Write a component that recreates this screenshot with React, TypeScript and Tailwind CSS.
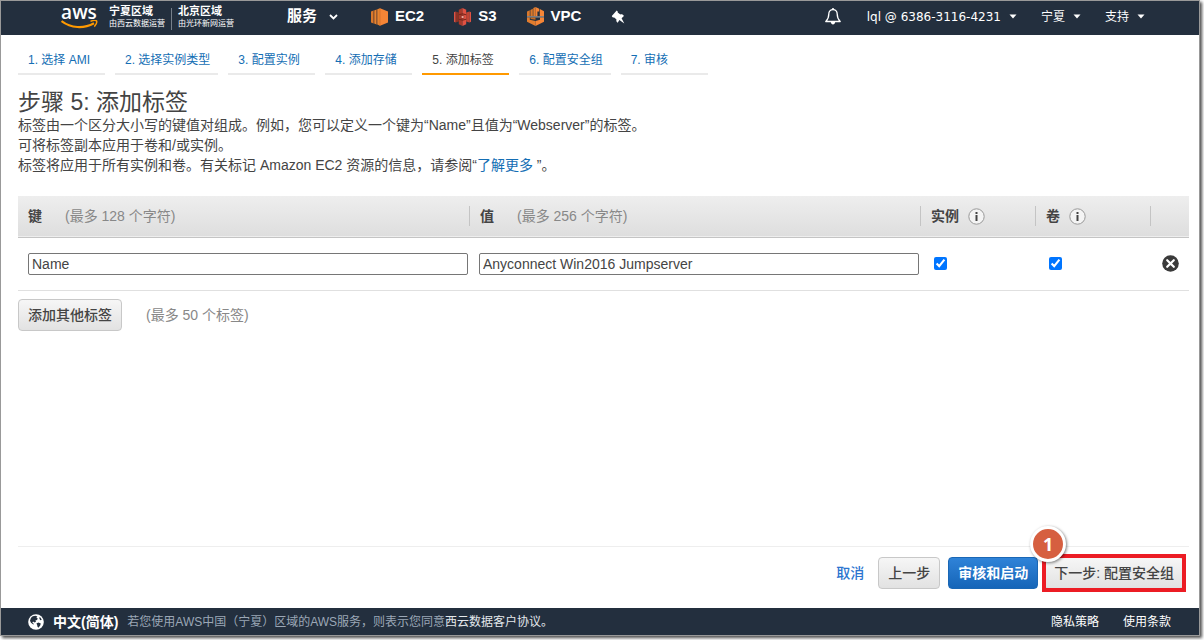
import { useState } from 'react'
import type { ReactNode } from 'react'
import clsx from 'clsx'

const steps = [
  '1. 选择 AMI',
  '2. 选择实例类型',
  '3. 配置实例',
  '4. 添加存储',
  '5. 添加标签',
  '6. 配置安全组',
  '7. 审核',
]

const currentStep = 4

function Ec2Icon() {
  return (
    <svg viewBox="0 0 17 18" className="h-[18px] w-[17px]" aria-hidden="true">
      <path d="M0 3.500 2.600 2.600v12.800L0 14.500z" fill="#d9782b" />
      <path d="M3.200 2.400 5.600 1.600v14.800l-2.400-.8z" fill="#e8842f" />
      <path d="M2.600 2.600h.6v12.900h-.6zM5.600 1.600h.7v14.900h-.7z" fill="#9d5025" />
      <path d="M6.300 1.300 9 .2v17.600l-2.700-1.200z" fill="#e8842f" />
      <path d="m9 .2 8 3.300v11L9 17.800z" fill="#f58536" />
      <path d="M9 .2v17.600" stroke="#c96a28" strokeWidth="0.6" />
    </svg>
  )
}

function S3Icon() {
  return (
    <svg viewBox="0 0 17 18" className="h-[18px] w-[17px]" aria-hidden="true">
      <path d="M1.500 3.400 4.800 4.400v9.200l-3.300 1z" fill="#8c3123" />
      <path d="M0 4.200 1.500 3.400v11.200L0 13.800z" fill="#e05243" />
      <path d="m15.500 3.400-3.300 1v9.200l3.300 1z" fill="#c04434" />
      <path d="m15.500 3.400 1.500.8v9.600l-1.500.8z" fill="#e05243" />
      <path d="M8.500 0 4.800 1.800v14.400L8.500 18z" fill="#a93a2b" />
      <path d="m8.500 0 3.700 1.800v14.400L8.500 18z" fill="#e05243" />
      <path d="M4.800 6.200 8.500 5.300l3.700.9v1L8.500 6.600l-3.700.6zM4.800 11.800l3.700.9 3.700-.9v-1l-3.700.6-3.700-.6z" fill="#7a281c" />
      <path d="M6.800 7.400h3.400v3.200H6.800z" fill="#8c3123" />
      <path d="M7.600 8h2v2h-2z" fill="#f2a79d" />
    </svg>
  )
}

function VpcIcon() {
  return (
    <svg viewBox="0 0 17 19" className="h-[19px] w-[17px]" aria-hidden="true">
      <path d="M0 4.400 2.800 3.200v6H0zM3.400 2.900 5.800 1.800v7.400H3.400z" fill="#d9782b" />
      <path d="M8.500 0 6.300 1v8.200h2.200z" fill="#e27d2e" />
      <path d="m8.500 0 3.700 1.700v2.800h-1.800v4.700H8.500z" fill="#f58536" />
      <path d="m12.800 2 4.200 2.200v5h-4.200z" fill="#f58536" />
      <path d="M0 9.300h17v1.200H0z" fill="#8f9aa5" />
      <path d="M0 10.500h2.800v2.200l5.700 1.200V19L0 14.800z" fill="#e27d2e" />
      <path d="M3.600 10.500h4.900v2.200l-4.900-.8z" fill="#c46a22" />
      <path d="M8.500 13.900 13 12.800v-2.300h4v4.300L8.500 19z" fill="#f58536" />
    </svg>
  )
}

function PinIcon() {
  return (
    <svg viewBox="0 0 14 14" className="size-[14px]" aria-hidden="true">
      <path
        d="M5.700.4c1 .4 1.300 1.300 1 2.100l2.700 1.900c1.200-.4 2.900.1 3.500 1.500L10.600 8.200l2.700 5.200-4.900-3.300-1.700 2.700c-1.300-.7-1.700-2-1.200-3.200L3.200 7.500C2.300 7.600 1.100 7.200.8 6z"
        fill="#fff"
      />
    </svg>
  )
}

function BellIcon() {
  return (
    <svg viewBox="0 0 16 17" className="h-[17px] w-4" fill="none" aria-hidden="true">
      <path
        d="M8 1.600c-2.700 0-4.200 1.900-4.200 4.500 0 3.900-1 5.600-3 7.400h14.400c-2-1.800-3-3.500-3-7.400 0-2.600-1.500-4.500-4.200-4.500z"
        stroke="#fff"
        strokeWidth="1.300"
        strokeLinejoin="round"
      />
      <path d="M7.200 0h1.600v2H7.200zM5.800 14h4.400c-.2 1.500-1 2.400-2.200 2.400S6 15.500 5.800 14z" fill="#fff" />
    </svg>
  )
}

function GlobeIcon() {
  return (
    <svg viewBox="0 0 16 16" className="size-4" aria-hidden="true">
      <circle cx="8" cy="8" r="7.800" fill="#fff" />
      <path
        d="M2.800 4.200C4 2.600 5.600 1.800 7.400 1.800l2 .8-1 1.200 1.400.6-.8 1.600-1.600.6.6 1.200-1.400.6-1.600-1-.6 1.400 1.600 1.200-.8.6-2.200-1.800L2 6.800zM11 3.400l1.400.2 1.400 2.200-1.600.4zM8.400 9.400l2-.8 2.400 1-.6 2-1.800 2.200-1-1.200-.2-1.600z"
        fill="#232f3e"
      />
    </svg>
  )
}

function InfoIcon() {
  return (
    <svg viewBox="0 0 17 17" className="size-[17px]" aria-hidden="true">
      <circle cx="8.500" cy="8.500" r="7.700" fill="#f4f4f4" stroke="#999" />
      <path d="M7.500 4h2v2h-2zM7.500 7h2v6h-2z" fill="#444" />
    </svg>
  )
}

function RemoveIcon() {
  return (
    <svg viewBox="0 0 17 17" className="size-[17px]" aria-hidden="true">
      <circle cx="8.500" cy="8.500" r="8.300" fill="#3a3a3a" />
      <path d="m5.200 5.200 6.600 6.600m0-6.600-6.600 6.600" stroke="#fff" strokeWidth="2.200" strokeLinecap="round" />
    </svg>
  )
}

function Caret() {
  return (
    <svg viewBox="0 0 8 5" className="h-[5px] w-2" aria-hidden="true">
      <path d="M.5.500h7L4 4.500z" fill="#fff" />
    </svg>
  )
}

function Logo() {
  return (
    <a href="#home" className="flex items-start text-white">
      <span className="flex w-9 flex-col items-center">
        <span className="font-['Open_Sans',sans-serif] text-[19px] leading-[16px] font-semibold">aws</span>
        <svg viewBox="0 0 37 9" className="h-[9px] w-[37px]" fill="none" aria-hidden="true">
          <path d="M.5 1c9.500 7.300 22 8 32.500 2.200" stroke="#f90" strokeWidth="2.200" />
          <path d="M29.500 1.400c2.500-1.100 5-1.200 6-.6.500 1.100-.3 3.900-2.200 5.800" stroke="#f90" strokeWidth="1.500" />
        </svg>
      </span>
      <span className="ml-3 flex flex-col whitespace-nowrap">
        <span className="text-[11px] leading-[14px] font-bold">宁夏区域</span>
        <span className="text-[8px] leading-[12px]">由西云数据运营</span>
      </span>
      <span className="mx-1.5 mt-1 h-[22px] w-px bg-[#77808b]" />
      <span className="flex flex-col whitespace-nowrap">
        <span className="text-[11px] leading-[14px] font-bold">北京区域</span>
        <span className="text-[8px] leading-[12px]">由光环新网运营</span>
      </span>
    </a>
  )
}

function Shortcut({ icon, label }: { icon: ReactNode; label: string }) {
  return (
    <a href={`#${label.toLowerCase()}`} className="flex items-center gap-[7px] text-[15px] font-bold text-white">
      {icon}
      {label}
    </a>
  )
}

function NavMenu({ label }: { label: string }) {
  return (
    <button type="button" className="flex items-center gap-2 text-xs whitespace-nowrap text-white">
      {label}
      <Caret />
    </button>
  )
}

function Topbar() {
  return (
    <header className="flex h-[34px] items-center justify-between bg-[#232f3e] pr-[54px] pb-[3px] pl-[60px]">
      <div className="flex items-center">
        <Logo />
        <button type="button" className="ml-[53px] flex items-center gap-3 text-[15px] font-bold text-white">
          服务
          <svg viewBox="0 0 9 6" className="h-1.5 w-[9px]" fill="none" aria-hidden="true">
            <path d="M1 1l3.500 3.500L8 1" stroke="#fff" strokeWidth="1.800" />
          </svg>
        </button>
        <nav className="ml-[33px] flex items-center gap-[30px]">
          <Shortcut icon={<Ec2Icon />} label="EC2" />
          <Shortcut icon={<S3Icon />} label="S3" />
          <Shortcut icon={<VpcIcon />} label="VPC" />
          <button type="button" aria-label="固定">
            <PinIcon />
          </button>
        </nav>
      </div>
      <div className="flex items-center gap-6 font-['DejaVu_Sans','Noto_Sans_CJK_SC',sans-serif]">
        <button type="button" className="mr-0.5" aria-label="通知">
          <BellIcon />
        </button>
        <NavMenu label="lql @ 6386-3116-4231" />
        <NavMenu label="宁夏" />
        <NavMenu label="支持" />
      </div>
    </header>
  )
}

function StepTabs() {
  return (
    <nav className="flex gap-2.5 text-xs">
      {steps.map((step, i) => (
        <a
          key={step}
          href={`#step-${i + 1}`}
          className={clsx(
            'min-w-[87px] border-b-2 pt-4 pr-2 pb-1 pl-2.5 leading-[18px]',
            i === currentStep ? 'border-[#f90] text-[#444]' : 'border-[#eaeaea] text-[#146eb4]',
          )}
        >
          {step}
        </a>
      ))}
    </nav>
  )
}

function Button({ children, primary }: { children: ReactNode; primary?: boolean }) {
  return (
    <button
      type="button"
      className={clsx(
        'h-8 rounded border bg-linear-to-b px-[9px] text-sm whitespace-nowrap',
        primary
          ? 'border-[#1a67b5] from-[#2f83d8] to-[#1565b8] font-bold text-white'
          : 'border-[#c8c8c8] from-[#f6f6f6] to-[#e2e2e2] font-medium text-[#444]',
      )}
    >
      {children}
    </button>
  )
}

function HeadCell({ title, hint, info, first }: { title?: string; hint?: string; info?: boolean; first?: boolean }) {
  return (
    <th scope="col" className="p-0 font-normal">
      <div className={clsx('flex h-5 items-center pl-2.5', !first && 'border-l border-[#c4c4c4]')}>
        <span className="font-bold text-[#444]">{title}</span>
        {hint && <span className="ml-[23px] text-[#888]">{hint}</span>}
        {info && (
          <button type="button" className="ml-[9px]" aria-label={`${title} 信息`}>
            <InfoIcon />
          </button>
        )}
      </div>
    </th>
  )
}

function TagTable() {
  const [tag, setTag] = useState({ key: 'Name', value: 'Anyconnect Win2016 Jumpserver', instance: true, volume: true })
  const inputClass = 'block h-[22px] w-full rounded-xs border border-[#767676] bg-white px-[3px] text-sm text-[#444]'

  return (
    <table className="mt-[21px] w-full table-fixed border-collapse text-left text-sm">
      <colgroup>
        <col />
        <col />
        <col className="w-[115px]" />
        <col className="w-[115px]" />
        <col className="w-[39px]" />
      </colgroup>
      <thead>
        <tr className="h-[41px] border-b border-[#c4c4c4] bg-linear-to-b from-[#eee] to-[#dedede]">
          <HeadCell title="键" hint="(最多 128 个字符)" first />
          <HeadCell title="值" hint="(最多 256 个字符)" />
          <HeadCell title="实例" info />
          <HeadCell title="卷" info />
          <HeadCell />
        </tr>
      </thead>
      <tbody>
        <tr className="h-[53px] border-b border-[#e0e0e0]">
          <td className="pr-px pl-2.5">
            <input
              aria-label="键"
              className={inputClass}
              value={tag.key}
              onChange={(e) => setTag({ ...tag, key: e.target.value })}
            />
          </td>
          <td className="pr-px pl-2.5">
            <input
              aria-label="值"
              className={inputClass}
              value={tag.value}
              onChange={(e) => setTag({ ...tag, value: e.target.value })}
            />
          </td>
          <td className="pl-3.5">
            <input
              type="checkbox"
              aria-label="实例"
              className="block size-[13px] accent-[#0075ff]"
              checked={tag.instance}
              onChange={(e) => setTag({ ...tag, instance: e.target.checked })}
            />
          </td>
          <td className="pl-3.5">
            <input
              type="checkbox"
              aria-label="卷"
              className="block size-[13px] accent-[#0075ff]"
              checked={tag.volume}
              onChange={(e) => setTag({ ...tag, volume: e.target.checked })}
            />
          </td>
          <td className="pl-3">
            <button type="button" className="block" aria-label="删除标签">
              <RemoveIcon />
            </button>
          </td>
        </tr>
      </tbody>
    </table>
  )
}

function Actions() {
  return (
    <div className="mr-2.5 ml-[17px] flex items-center justify-end border-t border-[#eee] pt-[7px] pr-[3px] pb-4 text-sm">
      <a href="#cancel" className="mr-3.5 font-medium text-[#2b74cf]">
        取消
      </a>
      <div className="flex items-center gap-2">
        <Button>上一步</Button>
        <Button primary>审核和启动</Button>
      </div>
      <div className="relative ml-1 flex border-4 border-[#ec1c24]">
        <div className="-mx-0.5 -my-px flex">
          <Button>下一步: 配置安全组</Button>
        </div>
        <div className="pointer-events-none absolute -inset-1 border-4 border-[#ec1c24]" />
        <span className="absolute -top-8 -left-4 flex size-9 items-center justify-center rounded-full border-3 border-white bg-[#d65f40] font-['Open_Sans',sans-serif] text-lg font-bold text-white shadow-[1px_1px_3px_rgba(0,0,0,0.5)]">
          1
        </span>
      </div>
    </div>
  )
}

function Footer() {
  return (
    <footer className="flex h-[27px] items-center justify-between bg-[#232f3e] pr-7 pl-[27px] text-xs whitespace-nowrap text-white">
      <div className="flex items-center">
        <GlobeIcon />
        <button type="button" className="ml-[9px] text-sm font-bold">
          中文(简体)
        </button>
        <p className="ml-[9px] text-[#9ba7b6]">
          若您使用AWS中国（宁夏）区域的AWS服务，则表示您同意
          <a href="#agreement" className="text-[#e4e8ec]">
            西云数据客户协议。
          </a>
        </p>
      </div>
      <div className="flex gap-6">
        <a href="#privacy">隐私策略</a>
        <a href="#terms">使用条款</a>
      </div>
    </footer>
  )
}

export default function App() {
  return (
    <div className="flex min-h-screen flex-col bg-white pr-1 pb-1 font-['Liberation_Sans','Noto_Sans_CJK_SC',sans-serif] text-[#444]">
      <div className="flex flex-1 flex-col border border-[#999] shadow-[2px_2px_3px_rgba(0,0,0,0.7)]">
        <Topbar />
        <main className="flex-1 pr-[10px] pl-[17px]">
          <StepTabs />
          <h1 className="mt-3.5 text-[23px] leading-[26px]">步骤 5: 添加标签</h1>
          <div className="text-sm leading-5">
            <p>标签由一个区分大小写的键值对组成。例如，您可以定义一个键为“Name”且值为“Webserver”的标签。</p>
            <p>可将标签副本应用于卷和/或实例。</p>
            <p>
              标签将应用于所有实例和卷。有关标记 Amazon EC2 资源的信息，请参阅“
              <a href="#learn-more" className="text-[#146eb4]">
                了解更多
              </a>{' '}
              ”。
            </p>
          </div>
          <TagTable />
          <div className="mt-2 flex items-center gap-6 text-sm">
            <Button>添加其他标签</Button>
            <span className="text-[#888]">(最多 50 个标签)</span>
          </div>
        </main>
        <Actions />
        <Footer />
      </div>
    </div>
  )
}
